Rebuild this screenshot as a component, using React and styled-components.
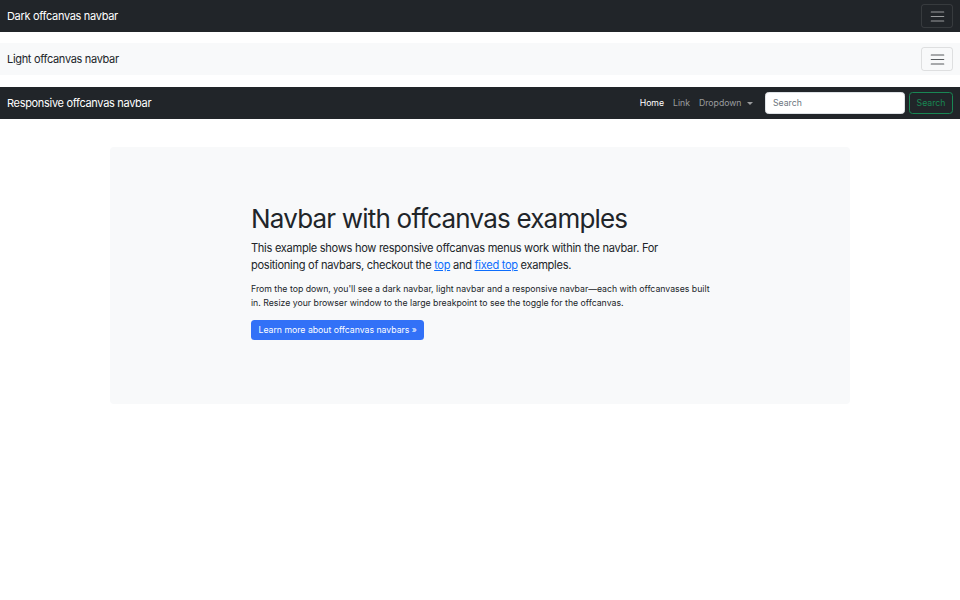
import React from 'react'
import styled, { createGlobalStyle } from 'styled-components'

const GlobalStyle = createGlobalStyle`
    * { box-sizing: border-box; }
    body {
        margin: 0;
        background: #fff;
        color: #212529;
        font-family: Inter, "Noto Sans", sans-serif;
        -webkit-font-smoothing: antialiased;
    }
`;

const Navbar = styled.nav`
    height: 32px;
    display: flex;
    align-items: center;
    justify-content: space-between;
    padding: 0 7px;
    margin-bottom: ${p => p.gap || 0}px;
    background: ${p => p.dark ? '#212529' : '#f8f9fa'};
    color: ${p => p.dark ? '#fff' : '#212529'};
`;

const Brand = styled.a`
    font-size: 11px;
    letter-spacing: -0.32px;
    color: inherit;
    text-decoration: none;
    white-space: nowrap;
`;

const Toggler = styled.button`
    width: 32px;
    height: 24px;
    padding: 0;
    display: flex;
    align-items: center;
    justify-content: center;
    background: transparent;
    border-radius: 3px;
    border: 1px solid ${p => p.dark ? 'rgba(255,255,255,.1)' : 'rgba(0,0,0,.1)'};
    color: ${p => p.dark ? 'rgba(255,255,255,.55)' : 'rgba(33,37,41,.75)'};
`;

const NavRight = styled.div`
    display: flex;
    align-items: center;
`;

const NavLinks = styled.ul`
    display: flex;
    list-style: none;
    margin: 0 8px 0 0;
    padding: 0;
`;

const NavLink = styled.li`
    font-size: 8.7px;
    padding: 0 4.5px;
    color: ${p => p.active ? '#fff' : 'rgba(255,255,255,.55)'};
    display: flex;
    align-items: center;
    gap: 5px;
`;

const Caret = styled.span`
    width: 0;
    height: 0;
    border-top: 3px solid currentColor;
    border-left: 3px solid transparent;
    border-right: 3px solid transparent;
`;

const SearchForm = styled.form`
    display: flex;
    gap: 4px;
`;

const SearchInput = styled.input`
    width: 140px;
    height: 22px;
    padding: 0 7px;
    font: inherit;
    font-size: 8.7px;
    color: #212529;
    background: #fff;
    border: 1px solid #dee2e6;
    border-radius: 3.5px;
    outline: none;
    &::placeholder { color: #6c757d; }
`;

const SearchButton = styled.button`
    width: 44px;
    height: 22px;
    padding: 0;
    font: inherit;
    font-size: 8.7px;
    color: #198754;
    background: transparent;
    border: 1px solid #198754;
    border-radius: 3.5px;
`;

const Main = styled.main`
    padding: 28px 110px 0;
`;

const Hero = styled.div`
    background: #f8f9fa;
    border-radius: 4px;
    padding: 56px 0 64px;
    display: flex;
    justify-content: center;
`;

const Column = styled.div`
    width: 460px;
    margin-left: 2px;
`;

const Title = styled.h1`
    margin: 0 0 6px;
    font-size: 26px;
    font-weight: 400;
    letter-spacing: -0.8px;
    line-height: 31px;
    color: #212529;
`;

const Lead = styled.p`
    margin: 0 0 8px;
    font-size: 11.1px;
    letter-spacing: -0.3px;
    line-height: 17px;
    a { color: #0d6efd; }
`;

const Text = styled.p`
    margin: 0 0 7px;
    font-size: 8.72px;
    letter-spacing: 0;
    line-height: 14px;
`;

const PrimaryButton = styled.a`
    display: inline-block;
    height: 20px;
    line-height: 20px;
    padding: 0 7.5px;
    font-size: 8.7px;
    color: #fff;
    background: #3271f7;
    border-radius: 3.5px;
    text-decoration: none;
`;

function Burger() {
    return (
        <svg width="17" height="17" viewBox="0 0 30 30">
            <path stroke="currentColor" strokeLinecap="round" strokeWidth="2" d="M4 7h22M4 15h22M4 23h22" />
        </svg>
    )
}

export default function App() {
    return (
        <>
            <GlobalStyle />
            <Navbar dark gap={11}>
                <Brand href="#">Dark offcanvas navbar</Brand>
                <Toggler dark><Burger /></Toggler>
            </Navbar>
            <Navbar gap={12}>
                <Brand href="#">Light offcanvas navbar</Brand>
                <Toggler><Burger /></Toggler>
            </Navbar>
            <Navbar dark>
                <Brand href="#">Responsive offcanvas navbar</Brand>
                <NavRight>
                    <NavLinks>
                        <NavLink active>Home</NavLink>
                        <NavLink>Link</NavLink>
                        <NavLink>Dropdown <Caret /></NavLink>
                    </NavLinks>
                    <SearchForm onSubmit={e => e.preventDefault()}>
                        <SearchInput type="search" placeholder="Search" />
                        <SearchButton type="submit">Search</SearchButton>
                    </SearchForm>
                </NavRight>
            </Navbar>
            <Main>
                <Hero>
                    <Column>
                        <Title>Navbar with offcanvas examples</Title>
                        <Lead>
                            This example shows how responsive offcanvas menus work within the navbar. For positioning of navbars, checkout the <a href="#">top</a> and <a href="#">fixed top</a> examples.
                        </Lead>
                        <Text>
                            From the top down, you'll see a dark navbar, light navbar and a responsive navbar—each with offcanvases built in. Resize your browser window to the large breakpoint to see the toggle for the offcanvas.
                        </Text>
                        <PrimaryButton href="#">Learn more about offcanvas navbars »</PrimaryButton>
                    </Column>
                </Hero>
            </Main>
        </>
    )
}
